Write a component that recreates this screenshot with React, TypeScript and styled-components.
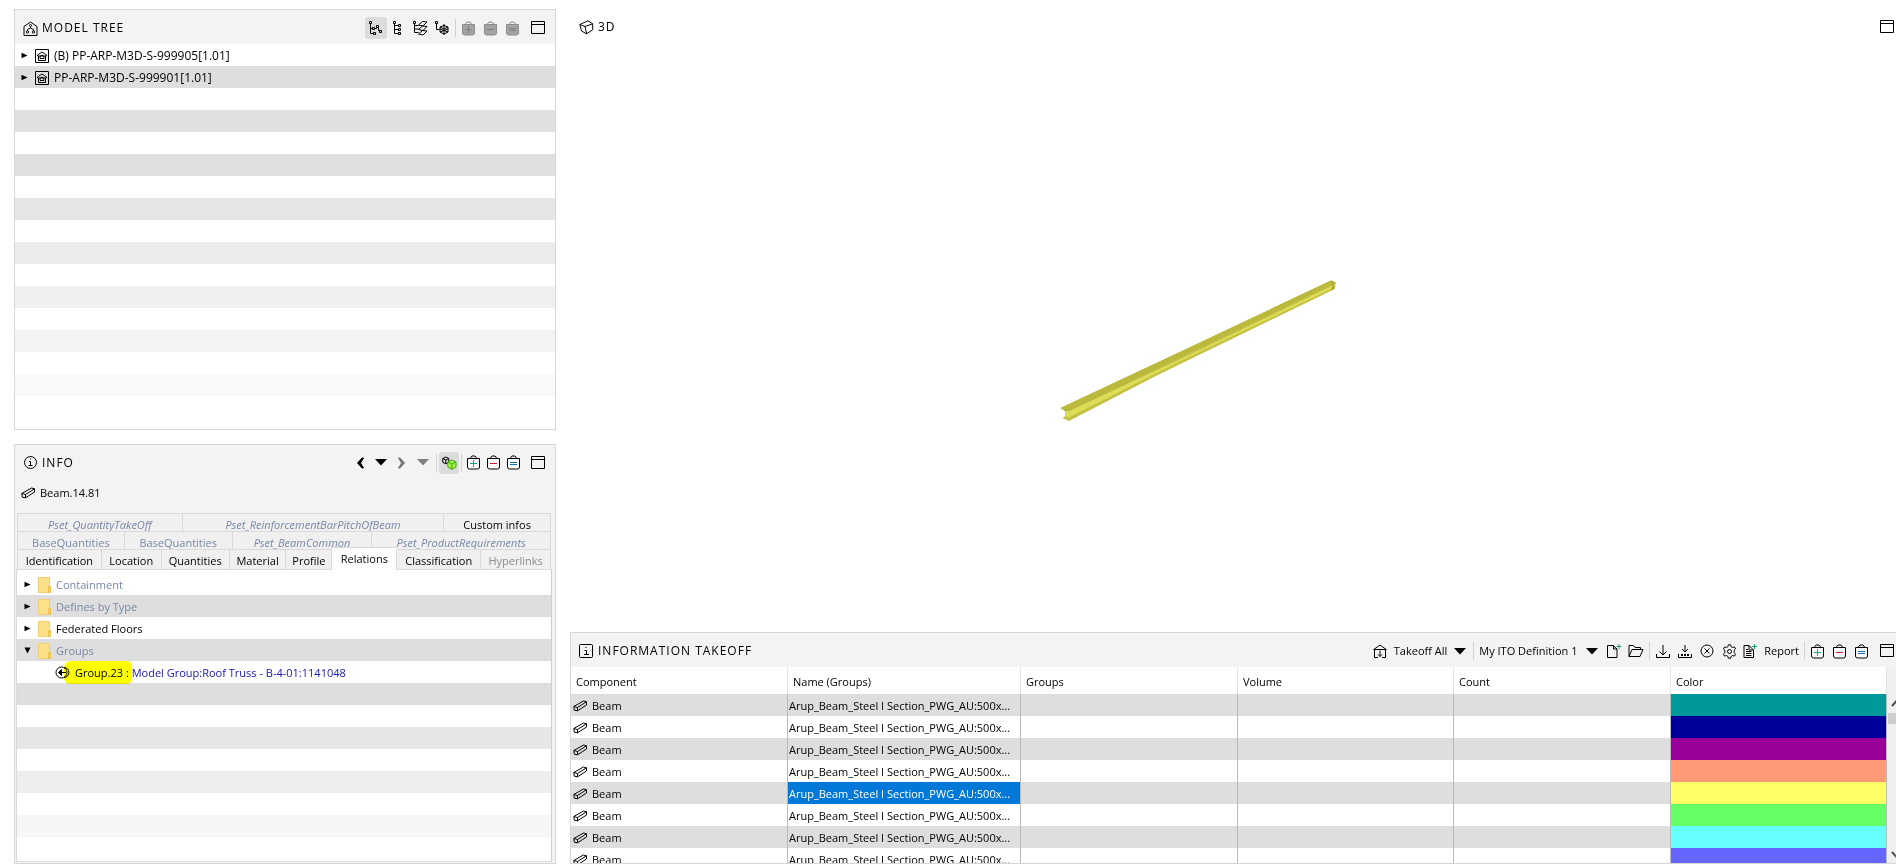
import React from 'react';
import styled, { createGlobalStyle, css } from 'styled-components';

const GlobalStyle = createGlobalStyle`
  *, *::before, *::after { box-sizing: border-box; }
  body {
    margin: 0;
    background: #fff;
    color: #000;
    font: 11px/16px "Open Sans", "Noto Sans", sans-serif;
  }
  button, select { font: inherit; color: inherit; }
  ul { list-style: none; margin: 0; padding: 0; }
`;

/* ---------- layout ---------- */

const Workspace = styled.main`
  display: grid;
  grid-template-columns: 542px minmax(0, 1fr);
  column-gap: 14px;
  height: 100vh;
  padding: 9px 0 0 14px;
  overflow: hidden;
`;

const LeftDock = styled.div`
  display: grid;
  grid-template-rows: minmax(0, 1fr) minmax(0, 1fr);
  row-gap: 14px;
  min-height: 0;
`;

const RightDock = styled.div`
  display: grid;
  grid-template-rows: minmax(0, 1fr) 232px;
  row-gap: 12px;
  min-width: 0;
  min-height: 0;
`;

const Panel = styled.section<{ $bleed?: boolean; $bare?: boolean }>`
  display: flex;
  flex-direction: column;
  min-height: 0;
  min-width: 0;
  overflow: hidden;
  border: 1px solid ${(p) => (p.$bare ? 'transparent' : '#d6d6d6')};
  background: ${(p) => (p.$bare ? '#fff' : '#f3f3f3')};
  ${(p) => p.$bleed && css`border-right: 0;`}
`;

const PanelHeader = styled.header<{ $tight?: boolean; $bare?: boolean }>`
  display: flex;
  flex: 0 0 34px;
  align-items: center;
  justify-content: space-between;
  padding: ${(p) => (p.$bare ? 0 : 2)}px ${(p) => (p.$tight ? 0 : 3)}px 0 8px;
`;

const PanelTitle = styled.h2`
  display: flex;
  align-items: center;
  gap: 4px;
  margin: 0;
  font-size: 12px;
  font-weight: 400;
  letter-spacing: 1px;
  white-space: nowrap;
`;

const Toolbar = styled.div`
  display: flex;
  align-items: center;
`;

const ToolButton = styled.button<{ $active?: boolean; $size?: number }>`
  display: inline-flex;
  align-items: center;
  justify-content: center;
  width: ${(p) => p.$size ?? 22}px;
  height: 22px;
  padding: 0;
  border: 0;
  border-radius: 3px;
  background: ${(p) => (p.$active ? '#dcdcdc' : 'transparent')};
`;

const EdgeButton = styled(ToolButton)`
  justify-content: flex-end;
  width: 23px;
  padding-right: 1px;
`;

const TextButton = styled.button<{ $menu?: boolean }>`
  display: inline-flex;
  align-items: center;
  gap: ${(p) => (p.$menu ? 7 : 6)}px;
  height: 22px;
  padding: 0 ${(p) => (p.$menu ? 5 : 3)}px 0 3px;
  border: 0;
  background: transparent;
  white-space: nowrap;
`;

const Separator = styled.span`
  width: 1px;
  height: 18px;
  margin: 0 2px;
  background: #d2d2d2;
`;

const Icon = styled.svg`
  flex: none;
  display: block;
  fill: none;
  stroke: currentColor;
  stroke-width: 1;
`;

/* ---------- trees ---------- */

const TreeList = styled.ul<{ $inset?: boolean }>`
  flex: 1;
  min-height: 0;
  overflow: hidden;
  background: #fff;
  ${(p) =>
    p.$inset &&
    css`
      margin: 0 3px 1px 1px;
      padding-top: 3px;
      border: 1px solid #dadada;
      border-right-color: #cfcfcf;
    `}
`;

const TreeRow = styled.li<{ $bg?: string; $tone?: string; $large?: boolean }>`
  display: flex;
  align-items: center;
  gap: 5px;
  height: 22px;
  padding: ${(p) => (p.$large ? '1px 0 0 3px' : '2px 0 0 4px')};
  background: ${(p) => p.$bg ?? '#fff'};
  color: ${(p) => p.$tone ?? '#000'};
  font-size: ${(p) => (p.$large ? 12 : 11)}px;
  white-space: nowrap;
`;

const Twisty = styled.button`
  display: flex;
  align-items: center;
  justify-content: center;
  width: 12px;
  height: 20px;
  padding: 0;
  border: 0;
  background: transparent;
  color: #000;
`;

const ChildRow = styled(TreeRow)`
  padding-left: 38px;
`;

const Marked = styled.span`
  position: relative;
  &::before {
    content: '';
    position: absolute;
    inset: -4px -3px -4px -11px;
    border-radius: 7px 5px 5px 6px;
    background: #ff0;
    mix-blend-mode: multiply;
  }
`;

const GroupLink = styled.a`
  color: #1616b4;
  text-decoration: none;
`;

/* ---------- info panel ---------- */

const ObjectLine = styled.div`
  display: flex;
  flex: 0 0 28px;
  align-items: center;
  gap: 4px;
  padding: 1px 0 0 6px;
  margin-bottom: 6px;
`;

const Tabs = styled.div`
  margin: 0 4px 0 2px;
`;

const TabRow = styled.div<{ $cols: string }>`
  display: grid;
  grid-template-columns: ${(p) => p.$cols};
  border-right: 1px solid #dadada;
`;

const Tab = styled.button<{ $kind?: 'pset' | 'base' | 'muted' | 'active' | 'plain' }>`
  height: 18px;
  padding: 4px 0 0;
  border: 1px solid #dadada;
  border-width: 1px 0 0 1px;
  background: #f0f0f0;
  line-height: 14px;
  white-space: nowrap;
  overflow: hidden;
  color: ${(p) =>
    p.$kind === 'pset' || p.$kind === 'base' ? '#7787a5' : p.$kind === 'muted' ? '#8c8c8c' : '#000'};
  font-style: ${(p) => (p.$kind === 'pset' ? 'italic' : 'normal')};
`;

const MainTab = styled(Tab)`
  height: 20px;
  ${(p) =>
    p.$kind === 'active' &&
    css`
      position: relative;
      z-index: 1;
      height: 23px;
      margin: -2px 0 -1px;
      padding: 1px 0 0;
      background: #fff;
    `}
`;

/* ---------- takeoff ---------- */

const SelectWrap = styled.label`
  display: inline-flex;
  align-items: center;
  gap: 8px;
  padding: 0 5px 0 3px;
`;

const PlainSelect = styled.select`
  appearance: none;
  height: 22px;
  padding: 0;
  border: 0;
  background: transparent;
`;

const TakeoffBody = styled.div`
  display: flex;
  flex: 1;
  min-height: 0;
  overflow: hidden;
`;

const TableClip = styled.div`
  flex: 1;
  min-width: 0;
  overflow: hidden;
`;

const TakeoffTable = styled.table`
  width: 100%;
  table-layout: fixed;
  border-spacing: 0;
`;

const HeadCell = styled.th`
  height: 27px;
  padding: 2px 0 0 5px;
  border-right: 1px solid #e4e4e4;
  background: #fff;
  font-weight: 400;
  text-align: left;
  vertical-align: middle;
`;

const BodyRow = styled.tr`
  background: #fff;
  &:nth-child(odd) { background: #dedede; }
`;

const Cell = styled.td<{ $fill?: string; $selected?: boolean }>`
  height: 22px;
  padding: 2px 1px 0;
  overflow: hidden;
  border-right: 1px solid #b9b9b9;
  white-space: nowrap;
  ${(p) => p.$fill && css`background: ${p.$fill};`}
  ${(p) => p.$selected && css`background: #0078d7; color: #fff;`}
`;

const ComponentName = styled.span`
  display: flex;
  align-items: center;
  gap: 4px;
  padding-left: 1px;
`;

const ScrollTrack = styled.div`
  display: flex;
  flex: 0 0 9px;
  flex-direction: column;
  align-items: flex-start;
  padding: 28px 0 0 1px;
  overflow: hidden;
  background: #f0f0f0;
`;

const ScrollThumb = styled.div`
  width: 17px;
  height: 11px;
  margin-bottom: auto;
  background: #cdcdcd;
`;

/* ---------- 3D scene ---------- */

const Scene = styled.svg`
  flex: 1;
  width: 100%;
  min-height: 0;
`;

/* ---------- icons ---------- */

const ModelIcon = () => (
  <Icon width="15" height="15" viewBox="0 0 15 15" aria-hidden="true">
    <path d="M1 5.500 7.500 1 14 5.500v9H1zM7.500 5.500v1.500M4.500 10V8.500l3-1.500 3 1.500V10" />
    <circle cx="7.500" cy="4.500" r="1" />
    <circle cx="4.500" cy="11" r="1.200" />
    <circle cx="10.500" cy="11" r="1.200" />
  </Icon>
);

const BuildingIcon = () => (
  <Icon width="14" height="14" viewBox="0 0 14 14" aria-hidden="true" strokeWidth="1">
    <path d="M.5.5h13v13H.5z" />
    <path d="M2.500 6 7 3l4.500 3v1h-9zM3.500 7v4.500h7V7M5 7.500 7 6l2 1.500v2H5z" />
  </Icon>
);

const WindowIcon = () => (
  <Icon width="15" height="14" viewBox="0 0 15 14" aria-hidden="true">
    <path d="M.5.5h13v12H.5zM.5 3.500h13" stroke="#000" />
  </Icon>
);

const TreeAIcon = () => (
  <Icon width="14" height="16" viewBox="0 0 14 16" aria-hidden="true" stroke="#000">
    <path d="M.5 1.500h2v2h-2zM1.500 3.500v10h3M1.500 8.500h2M3.500 7.500h2v2h-2zM4.500 12.500h2v2h-2zM5.500 8.500H7l1.500-1M7.500 5.500h2v2h-2zM9.500 7.500v3h1M10.500 10.500h2v2h-2z" />
  </Icon>
);

const TreeBIcon = () => (
  <Icon width="10" height="16" viewBox="0 0 10 16" aria-hidden="true" stroke="#000">
    <path d="M.5 1.500h2v2h-2zM1.500 3.500v10h4M1.500 5.500h4M1.500 9.500h4M5.500 4.500h2v2h-2zM5.500 8.500h2v2h-2zM5.500 12.500h2v2h-2z" />
  </Icon>
);

const TreeLayersIcon = () => (
  <Icon width="15" height="16" viewBox="0 0 15 16" aria-hidden="true">
    <path d="M.5 1.500h2v2h-2zM1.500 3.500v9h4M1.500 5.500h4M1.500 9h4" />
    <path d="m5.500 5 4-3.500 4.500.500-4 4zM5.500 9.500l4-3.500 4.500.5-4 4zM5.500 14l4-3.500 4.500.5-4 4z" />
  </Icon>
);

const TreeBoxIcon = () => (
  <Icon width="14" height="16" viewBox="0 0 14 16" aria-hidden="true">
    <path d="M.5 1.500h2v2h-2zM1.500 3.500v6h3M9 4v11M5 7l4-1.500L13 7v5l-4 2-4-2zM5 7l4 2 4-2M5 12l8-3M13 12 5 9" />
  </Icon>
);

type BagProps = { sign: 'plus' | 'minus' | 'equal'; off?: boolean };

const BagIcon = ({ sign, off }: BagProps) => {
  const tone = off ? '#7e7e7e' : sign === 'plus' ? '#12a58a' : sign === 'minus' ? '#d01c28' : '#1668c0';
  return (
    <Icon width="14" height="15" viewBox="0 0 14 15" aria-hidden="true">
      <path
        d="M.5 3.500h12v8.500q0 2-2 2h-8q-2 0-2-2z"
        fill={off ? '#a3a3a3' : '#fafafa'}
        stroke={off ? '#8c8c8c' : '#000'}
      />
      <path d="M3 3.500 5 1h3l2 2.500" stroke={off ? '#8c8c8c' : '#000'} />
      {sign === 'plus' && <path d="M3 8.500h7M6.500 5v7" stroke={tone} />}
      {sign === 'minus' && <path d="M3 8.500h7" stroke={tone} />}
      {sign === 'equal' && <path d="M3 7.500h7M3 9.500h7" stroke={tone} />}
    </Icon>
  );
};

const CubeIcon = () => (
  <Icon width="15" height="15" viewBox="0 0 15 15" aria-hidden="true">
    <path d="M.8 4.500 9 .8l4.700 3v6l-6 4L2.500 11zM.8 4.500 6 6.500l7.700-2.700M6 6.500l1.700 7.300" />
  </Icon>
);

const InfoIcon = () => (
  <Icon width="15" height="15" viewBox="0 0 15 15" aria-hidden="true">
    <circle cx="7.500" cy="7.500" r="6" />
    <path d="M7 4h1M6 6.500h1.500v4M5.500 10.500h4" />
  </Icon>
);

const InfoSquareIcon = () => (
  <Icon width="15" height="15" viewBox="0 0 15 15" aria-hidden="true" stroke="#000">
    <rect x=".5" y=".5" width="13" height="13" rx="1" />
    <path d="M6.500 3.500h1M5.500 6.500h2v4M5 10.500h5" />
  </Icon>
);

const BeamIcon = () => (
  <Icon width="15" height="12" viewBox="0 0 15 12" aria-hidden="true">
    <path d="m.8 6.500 9.700-5.500 3 .8v3.200L4.500 10.800l-3.200-.6zM.8 6.500l3.700 1 9-5.700M4.500 7.500v3.300" />
  </Icon>
);

const CaretDown = ({ tone = '#000' }: { tone?: string }) => (
  <Icon width="12" height="7" viewBox="0 0 12 7" aria-hidden="true">
    <path d="M0 0h12L6 6.500z" fill={tone} stroke="none" />
  </Icon>
);

const Chevron = ({ back, tone = '#000' }: { back?: boolean; tone?: string }) => (
  <Icon width="8" height="12" viewBox="0 0 8 12" aria-hidden="true">
    <path
      d={back ? 'M6 1 1.500 6 6 11h1.500L4.500 6l3-5z' : 'M2 1l4.500 5L2 11H.5l3-5-3-5z'}
      fill={tone}
      stroke={tone}
    />
  </Icon>
);

const TwistyIcon = ({ open }: { open?: boolean }) => (
  <Icon width="7" height="7" viewBox="0 0 7 7" aria-hidden="true">
    <path d={open ? 'M.5.500h6L3.500 6.500z' : 'M.500.800v5.400L6.500 3.500z'} fill="#000" stroke="none" />
  </Icon>
);

const FolderIcon = () => (
  <Icon width="13" height="16" viewBox="0 0 13 16" aria-hidden="true">
    <path d="M.5.5h11v15H.5z" fill="#fce08a" stroke="#f0cf6c" />
    <path d="M10.500 9.500h2v6h-2z" fill="#fbd96f" stroke="#e6c050" />
  </Icon>
);

const GroupIcon = () => (
  <Icon width="15" height="13" viewBox="0 0 15 13" aria-hidden="true">
    <circle cx="6.500" cy="6.500" r="5.500" />
    <path d="M9 1.500c2.500 0 5 2 5 5s-2.500 5-5 5M4 6.500h7M6.500 3.500 3.500 6.500l3 3z" />
    <path d="M6.500 4 4 6.500 6.500 9z" fill="#000" />
  </Icon>
);

const LinkedCubesIcon = () => (
  <Icon width="15" height="14" viewBox="0 0 15 14" aria-hidden="true">
    <path d="m.8 2.500 3-1.500 3 1.500v3.800l-3 1.500-3-1.500zM.8 2.500l3 1.500 3-1.500M3.800 4v3.800" stroke="#000" />
    <path d="m5.800 6 4-2 4.200 2v5l-4.200 2.300-4-2.300z" fill="#a6f24a" stroke="#3fa80c" />
    <path d="m5.800 6 4 2L14 6M9.800 8v5.300" stroke="#3fa80c" />
  </Icon>
);

const TakeoffIcon = () => (
  <Icon width="14" height="15" viewBox="0 0 14 15" aria-hidden="true">
    <path d="M.8 5.500 7 1l6.200 4.500M.5 5.500h13M1.500 5.500v8H5M12.500 5.500v8H9M7 6.500v6M5 10.500l2 2 2-2" />
  </Icon>
);

const NewDocIcon = () => (
  <Icon width="16" height="16" viewBox="0 0 16 16" aria-hidden="true">
    <path d="M1.500 2.500h6l3.500 3.500v8.500H1.500zM7.500 2.500V6H11" stroke="#000" />
    <path d="M10.500 3.500h5M13 1v5" stroke="#1f9f76" />
  </Icon>
);

const OpenIcon = () => (
  <Icon width="16" height="14" viewBox="0 0 16 14" aria-hidden="true">
    <path d="M1 12.500v-11h4.500l1.500 2h5.500v2M1 12.500 4 5.500h11l-3 7z" />
  </Icon>
);

const DownloadIcon = ({ dots }: { dots?: boolean }) => (
  <Icon width="15" height="15" viewBox="0 0 15 15" aria-hidden="true">
    <path d="M.5 10v3.500h13V10" />
    <path d={dots ? 'M7 1v7M4 5l3 3 3-3' : 'M7 1v10M3.500 7.500 7 11l3.500-3.500'} />
    {dots && <path d="M3 11h9" strokeDasharray="2 1" strokeWidth="2" />}
  </Icon>
);

const ClearIcon = () => (
  <Icon width="14" height="14" viewBox="0 0 14 14" aria-hidden="true">
    <circle cx="7" cy="7" r="6" />
    <path d="m4.500 4.500 5 5M9.500 4.500l-5 5" />
  </Icon>
);

const GearIcon = () => (
  <Icon width="15" height="15" viewBox="0 0 15 15" aria-hidden="true">
    <path d="M6.300.800h2.400l.4 1.900 1.500.800 1.800-.6 1.200 2-1.400 1.300v2.600l1.400 1.300-1.200 2-1.800-.6-1.500.9-.4 1.800H6.300l-.4-1.800-1.500-.9-1.800.6-1.200-2 1.400-1.300V6.200L1.400 4.900l1.200-2 1.800.6 1.500-.8z" />
    <circle cx="7.500" cy="7.500" r="2" />
  </Icon>
);

const ReportIcon = () => (
  <Icon width="15" height="16" viewBox="0 0 15 16" aria-hidden="true">
    <path d="M1 2.500h5L10.500 7v7.500H1zM6 2.500V7h4.500M3 6.500h2M3 8.500h5.500M3 10.500h5.500M3 12.500h5.500" stroke="#000" />
    <path d="M9 3.500h5M11.500 1v5" stroke="#1f9f76" />
  </Icon>
);

const ScrollArrow = ({ down }: { down?: boolean }) => (
  <Icon width="17" height="18" viewBox="0 0 17 18" aria-hidden="true">
    <path d={down ? 'm4 7 4.500 5L13 7' : 'm4 11 4.500-5 4.500 5'} stroke="#505050" strokeWidth="2" />
  </Icon>
);

/* ---------- data ---------- */

const MODELS = [
  { name: '(B) PP-ARP-M3D-S-999905[1.01]', bg: '#fff' },
  { name: 'PP-ARP-M3D-S-999901[1.01]', bg: '#dedede' },
];

const MODEL_STRIPES = [
  '#fff', '#e0e0e0', '#fff', '#e0e0e0', '#fff', '#e6e6e6', '#fff', '#ececec',
  '#fff', '#f0f0f0', '#fff', '#f4f4f4', '#fff', '#f9f9f9',
];

const RELATIONS = [
  { name: 'Containment', tone: '#7787a5', bg: '#fff' },
  { name: 'Defines by Type', tone: '#7787a5', bg: '#dedede' },
  { name: 'Federated Floors', tone: '#000', bg: '#fff' },
  { name: 'Groups', tone: '#7787a5', bg: '#dedede', open: true },
];

const RELATION_STRIPES = ['#dedede', '#fff', '#e6e6e6', '#fff', '#eee', '#fff', '#f6f6f6'];

const MAIN_TABS = [
  ['Identification', 'plain'],
  ['Location', 'plain'],
  ['Quantities', 'plain'],
  ['Material', 'plain'],
  ['Profile', 'plain'],
  ['Relations', 'active'],
  ['Classification', 'plain'],
  ['Hyperlinks', 'muted'],
] as const;

const COLUMNS = ['Component', 'Name (Groups)', 'Groups', 'Volume', 'Count', 'Color'];
const COLUMN_SHARES = [217, 233, 217, 216, 217, 216];
const ROW_COLORS = ['#009999', '#000099', '#990099', '#ff9977', '#ffff66', '#66ff66', '#66ffff', '#6666ff'];
const SELECTED_ROW = 4;

/* ---------- panels ---------- */

const ModelTreePanel = () => (
  <Panel>
    <PanelHeader>
      <PanelTitle><ModelIcon />MODEL TREE</PanelTitle>
      <Toolbar>
        <ToolButton $active aria-label="Containment structure"><TreeAIcon /></ToolButton>
        <ToolButton aria-label="Component structure"><TreeBIcon /></ToolButton>
        <ToolButton aria-label="Layer structure"><TreeLayersIcon /></ToolButton>
        <ToolButton aria-label="System structure"><TreeBoxIcon /></ToolButton>
        <Separator />
        <ToolButton disabled aria-label="Add to basket"><BagIcon sign="plus" off /></ToolButton>
        <ToolButton disabled aria-label="Remove from basket"><BagIcon sign="minus" off /></ToolButton>
        <ToolButton disabled aria-label="Set basket"><BagIcon sign="equal" off /></ToolButton>
        <ToolButton $size={28} aria-label="Maximize"><WindowIcon /></ToolButton>
      </Toolbar>
    </PanelHeader>
    <TreeList>
      {MODELS.map((m) => (
        <TreeRow key={m.name} $bg={m.bg} $large>
          <Twisty aria-label={`Expand ${m.name}`}><TwistyIcon /></Twisty>
          <BuildingIcon />
          {m.name}
        </TreeRow>
      ))}
      {MODEL_STRIPES.map((bg, i) => <TreeRow key={i} $bg={bg} aria-hidden="true" />)}
    </TreeList>
  </Panel>
);

const InfoPanel = () => (
  <Panel>
    <PanelHeader>
      <PanelTitle><InfoIcon />INFO</PanelTitle>
      <Toolbar>
        <ToolButton $size={20} aria-label="Back"><Chevron back /></ToolButton>
        <ToolButton aria-label="Back history"><CaretDown /></ToolButton>
        <ToolButton $size={20} aria-label="Forward"><Chevron tone="#777" /></ToolButton>
        <ToolButton aria-label="Forward history"><CaretDown tone="#808080" /></ToolButton>
        <Separator />
        <ToolButton $active $size={20} aria-label="Follow selection"><LinkedCubesIcon /></ToolButton>
        <Separator />
        <ToolButton $size={20} aria-label="Add to basket"><BagIcon sign="plus" /></ToolButton>
        <ToolButton $size={20} aria-label="Remove from basket"><BagIcon sign="minus" /></ToolButton>
        <ToolButton $size={20} aria-label="Set basket"><BagIcon sign="equal" /></ToolButton>
        <ToolButton $size={28} aria-label="Maximize"><WindowIcon /></ToolButton>
      </Toolbar>
    </PanelHeader>
    <ObjectLine><BeamIcon />Beam.14.81</ObjectLine>
    <Tabs role="tablist">
      <TabRow $cols="165fr 262fr 107fr">
        <Tab role="tab" $kind="pset">Pset_QuantityTakeOff</Tab>
        <Tab role="tab" $kind="pset">Pset_ReinforcementBarPitchOfBeam</Tab>
        <Tab role="tab">Custom infos</Tab>
      </TabRow>
      <TabRow $cols="107fr 108fr 140fr 179fr">
        <Tab role="tab" $kind="base">BaseQuantities</Tab>
        <Tab role="tab" $kind="base">BaseQuantities</Tab>
        <Tab role="tab" $kind="pset">Pset_BeamCommon</Tab>
        <Tab role="tab" $kind="pset">Pset_ProductRequirements</Tab>
      </TabRow>
      <TabRow $cols="84fr 60fr 68fr 57fr 46fr 65fr 84fr 70fr">
        {MAIN_TABS.map(([name, kind]) => (
          <MainTab key={name} role="tab" $kind={kind} aria-selected={kind === 'active'}>{name}</MainTab>
        ))}
      </TabRow>
    </Tabs>
    <TreeList $inset>
      {RELATIONS.map((r) => (
        <TreeRow key={r.name} $bg={r.bg} $tone={r.tone}>
          <Twisty aria-label={`Toggle ${r.name}`}><TwistyIcon open={r.open} /></Twisty>
          <FolderIcon />
          {r.name}
        </TreeRow>
      ))}
      <ChildRow>
        <GroupIcon />
        <span>
          <Marked>Group.23 :</Marked>{' '}
          <GroupLink href="#group-23">Model Group:Roof Truss - B-4-01:1141048</GroupLink>
        </span>
      </ChildRow>
      {RELATION_STRIPES.map((bg, i) => <TreeRow key={i} $bg={bg} aria-hidden="true" />)}
    </TreeList>
  </Panel>
);

const ViewerPanel = () => (
  <Panel $bleed $bare>
    <PanelHeader $tight $bare>
      <PanelTitle><CubeIcon />3D</PanelTitle>
      <EdgeButton aria-label="Maximize"><WindowIcon /></EdgeButton>
    </PanelHeader>
    <Scene viewBox="0 0 1326 576" role="img" aria-label="Steel beam">
      <g transform="translate(469 217) scale(.3333)">
        <path d="M62 443 430 270 875 60l14 6-2 18L350 345 88 481l-20-9 8-4v-16z" fill="#c6c447" />
        <path d="M62 443 430 270 875 60l14 6-9 6L440 283 88 452l-12 1z" fill="#bab83d" />
        <path d="m77 453 13-1L440 288 882 74v8L400 313 86 472l-9-3z" fill="#dedd58" />
        <path d="M68 472 86 472 400 316 886 80v5L350 345 88 481z" fill="#c3c144" />
        <path d="m875 60 14 6-1 3-5 2v8l4 2-1 4-12 4 4-8v-9z" fill="#aeab39" />
      </g>
    </Scene>
  </Panel>
);

const TakeoffPanel = () => (
  <Panel $bleed>
    <PanelHeader $tight>
      <PanelTitle><InfoSquareIcon />INFORMATION TAKEOFF</PanelTitle>
      <Toolbar>
        <TextButton $menu><TakeoffIcon />Takeoff All<CaretDown /></TextButton>
        <Separator />
        <SelectWrap>
          <PlainSelect aria-label="Takeoff definition">
            <option>My ITO Definition 1</option>
          </PlainSelect>
          <CaretDown />
        </SelectWrap>
        <ToolButton aria-label="New definition"><NewDocIcon /></ToolButton>
        <ToolButton aria-label="Open definition"><OpenIcon /></ToolButton>
        <Separator />
        <ToolButton aria-label="Export"><DownloadIcon /></ToolButton>
        <ToolButton aria-label="Export all"><DownloadIcon dots /></ToolButton>
        <ToolButton aria-label="Clear"><ClearIcon /></ToolButton>
        <ToolButton aria-label="Settings"><GearIcon /></ToolButton>
        <TextButton><ReportIcon />Report</TextButton>
        <Separator />
        <ToolButton aria-label="Add to basket"><BagIcon sign="plus" /></ToolButton>
        <ToolButton aria-label="Remove from basket"><BagIcon sign="minus" /></ToolButton>
        <ToolButton aria-label="Set basket"><BagIcon sign="equal" /></ToolButton>
        <EdgeButton aria-label="Maximize"><WindowIcon /></EdgeButton>
      </Toolbar>
    </PanelHeader>
    <TakeoffBody>
      <TableClip>
        <TakeoffTable>
          <colgroup>
            {COLUMN_SHARES.map((w, i) => <col key={i} style={{ width: `${(w / 1316) * 100}%` }} />)}
          </colgroup>
          <thead>
            <tr>{COLUMNS.map((c) => <HeadCell key={c} scope="col">{c}</HeadCell>)}</tr>
          </thead>
          <tbody>
            {ROW_COLORS.map((color, i) => (
              <BodyRow key={color}>
                <Cell><ComponentName><BeamIcon />Beam</ComponentName></Cell>
                <Cell $selected={i === SELECTED_ROW}>Arup_Beam_Steel I Section_PWG_AU:500x...</Cell>
                <Cell />
                <Cell />
                <Cell />
                <Cell $fill={color} />
              </BodyRow>
            ))}
          </tbody>
        </TakeoffTable>
      </TableClip>
      <ScrollTrack>
        <ScrollArrow />
        <ScrollThumb />
        <ScrollArrow down />
      </ScrollTrack>
    </TakeoffBody>
  </Panel>
);

export default function App() {
  return (
    <>
      <GlobalStyle />
      <Workspace>
        <LeftDock>
          <ModelTreePanel />
          <InfoPanel />
        </LeftDock>
        <RightDock>
          <ViewerPanel />
          <TakeoffPanel />
        </RightDock>
      </Workspace>
    </>
  );
}
